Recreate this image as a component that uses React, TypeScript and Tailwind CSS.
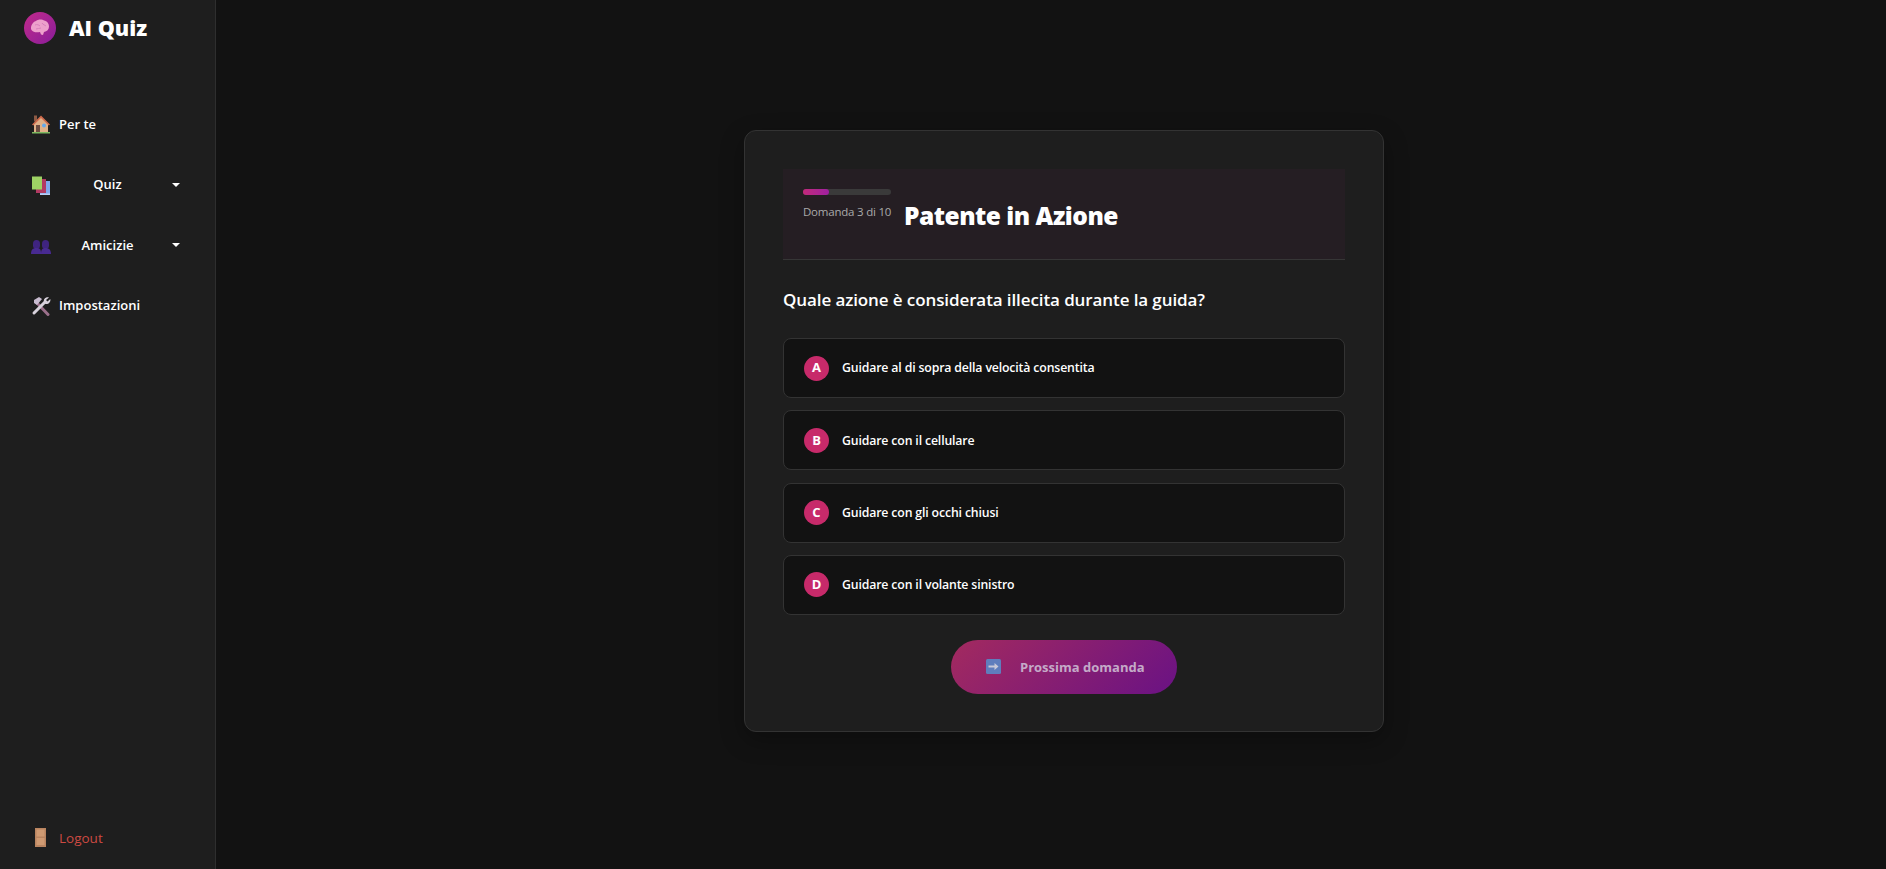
import React from "react";

const font = { fontFamily: '"Open Sans", "Noto Sans", sans-serif' };

function BrainIcon() {
  return (
    <svg viewBox="0 0 20 18" className="w-[20px] h-[18px]">
      <path d="M6 2c2-2 6-2 8-.5 3 .5 5 3 5 6 0 3-2 5-5 5.500l-1 3-2-.5-1-2.500c-3 .5-7 .5-8.500-2C0 8.500 2 3 6 2z" fill="#eda0cc" />
      <path d="M5 6c2-1 4 0 5 1M12 4c1 2 3 2 4 3M6 10c2 0 3-1 5-1" stroke="#d880bc" strokeWidth="1" fill="none" />
    </svg>
  );
}

function HouseIcon() {
  return (
    <svg viewBox="0 0 20 20" className="w-[20px] h-[20px]">
      <rect x="3" y="1.500" width="3" height="6" fill="#8d5a44" />
      <path d="M3 10 10 3l7 7v8H3z" fill="#e0b088" />
      <path d="M1 10.500 10 1.500l9 9-1.200 1L10 4 2.200 11.500z" fill="#cf6a4c" />
      <rect x="5" y="11" width="4" height="7" fill="#6d4c41" />
      <circle cx="13" cy="11.500" r="2" fill="#64a8ea" />
      <rect x="1" y="18" width="18" height="1.500" fill="#7cb860" />
    </svg>
  );
}

function BooksIcon() {
  return (
    <svg viewBox="0 0 20 20" className="w-[20px] h-[20px] mt-[2px]">
      <rect x="9" y="5" width="10" height="14" fill="#7fa8ec" />
      <rect x="9" y="17.500" width="10" height="1.500" fill="#b8cdf5" />
      <rect x="5" y="3" width="10" height="14" fill="#b23a62" />
      <rect x="1" y="0.500" width="10" height="13" fill="#9ed264" />
    </svg>
  );
}

function PeopleIcon() {
  return (
    <svg viewBox="0 0 20 14" className="w-[20px] h-[14px] mt-[4px]">
      <rect x="2" y="0" width="7" height="9" rx="3.500" fill="#3f2480" />
      <rect x="11" y="0" width="7" height="9" rx="3.500" fill="#3f2480" />
      <path d="M0 14c0-4 1.500-6 5.500-6S10 10 10 14z" fill="#482a92" />
      <path d="M10 14c0-4 1-6 4.500-6S20 10 20 14z" fill="#482a92" />
    </svg>
  );
}

function ToolsIcon() {
  return (
    <svg viewBox="0 0 20 20" className="w-[20px] h-[20px]">
      <path d="M6 7 17 18.500" stroke="#9a6f8a" strokeWidth="3" strokeLinecap="round" />
      <path d="M3 4l5-3 3 2-5 6-3-2z" fill="#c9bcd0" />
      <path d="M3 17 14 6" stroke="#d8d2dc" strokeWidth="3" strokeLinecap="round" />
      <path d="M13 6c-1-3 2-5.500 5-4.500l-3 2.500 1.500 1.500 2.800-2.500c.7 3-1.800 5.500-4.800 5z" fill="#d8d2dc" />
    </svg>
  );
}

function DoorIcon() {
  return (
    <svg viewBox="0 0 11 19" className="w-[11px] h-[19px]">
      <rect width="11" height="19" fill="#b98460" />
      <rect x="1.500" y="1.500" width="8" height="7" fill="#cf9a72" />
      <rect x="1.500" y="10" width="8" height="7" fill="#cf9a72" />
    </svg>
  );
}

function ArrowIcon() {
  return (
    <svg viewBox="0 0 15 15" className="w-[15px] h-[15px]">
      <rect width="15" height="15" rx="1.500" fill="#5f7dbd" />
      <path d="M2.500 6.500h6V4l4 3.500-4 3.500V8.500h-6z" fill="#c8c8d8" />
    </svg>
  );
}

const answers = [
  { letter: "A", text: "Guidare al di sopra della velocità consentita" },
  { letter: "B", text: "Guidare con il cellulare" },
  { letter: "C", text: "Guidare con gli occhi chiusi" },
  { letter: "D", text: "Guidare con il volante sinistro" },
];

function Sidebar() {
  return (
    <aside className="flex flex-col w-[216px] h-screen shrink-0 bg-[#1e1e1e] border-r border-[#2e2e2e]">
      <div className="flex items-center gap-[13px] pl-[24px] pt-[12px]">
        <div className="flex items-center justify-center w-[32px] h-[32px] rounded-full bg-gradient-to-br from-[#c2288a] to-[#8a1a9a]">
          <BrainIcon />
        </div>
        <span className="text-[21.500px] leading-[30px] font-extrabold text-white">AI Quiz</span>
      </div>
      <nav className="flex flex-col mt-[50px] pl-[31px] pr-[35px] text-[13px] font-semibold text-white">
        <div className="flex items-center gap-[8px] h-[60px]">
          <HouseIcon />
          <span className="pt-[1px]">Per te</span>
        </div>
        <div className="flex items-center h-[61px]">
          <BooksIcon />
          <span className="flex-1 text-center pl-[9px] pr-[17px] pt-[1px]">Quiz</span>
          <span className="w-0 h-0 border-x-[4px] border-x-transparent border-t-[4px] border-t-white" />
        </div>
        <div className="flex items-center h-[60px]">
          <PeopleIcon />
          <span className="flex-1 text-center pl-[9px] pr-[17px] pt-[1px]">Amicizie</span>
          <span className="w-0 h-0 border-x-[4px] border-x-transparent border-t-[4px] border-t-white" />
        </div>
        <div className="flex items-center gap-[8px] h-[61px]">
          <ToolsIcon />
          <span className="pt-[1px]">Impostazioni</span>
        </div>
      </nav>
      <div className="flex items-center gap-[13px] mt-auto mb-[21px] pl-[35px] text-[13.500px] font-medium text-[#cc4a42]">
        <DoorIcon />
        <span>Logout</span>
      </div>
    </aside>
  );
}

export default function App() {
  return (
    <div className="flex h-screen overflow-hidden bg-[#121212]" style={font}>
      <Sidebar />
      <main className="flex flex-1 items-center justify-center pl-[26px] pb-[7px]">
        <div className="w-[640px] h-[602px] px-[38px] pt-[38px] bg-[#1e1e1e] border border-[#333333] rounded-[12px] shadow-[0_8px_24px_rgba(0,0,0,0.3)]">
          <div className="flex h-[91px] px-[20px] pt-[20px] gap-[13px] bg-[#251e23] border-b border-[#363636]">
            <div className="w-[88px] shrink-0">
              <div className="w-full h-[6px] rounded-full bg-[#3a3a3a]">
                <div className="w-[26px] h-full rounded-full bg-gradient-to-r from-[#c2287a] to-[#a01ea0]" />
              </div>
              <p className="mt-[9px] text-[11.500px] leading-[16px] tracking-[-0.22px] text-[#aaaaaa] whitespace-nowrap">Domanda 3 di 10</p>
            </div>
            <h1 className="mt-[10px] text-[24.500px] leading-[34px] tracking-[-0.5px] font-extrabold text-white whitespace-nowrap">Patente in Azione</h1>
          </div>
          <h2 className="mt-[27px] text-[17px] leading-[26px] tracking-[-0.1px] font-semibold text-white">Quale azione è considerata illecita durante la guida?</h2>
          <div className="flex flex-col gap-[12.330px] mt-[25px]">
            {answers.map((answer) => (
              <div key={answer.letter} className="flex items-center gap-[13px] h-[60px] px-[20px] bg-[#121212] border border-[#333333] rounded-[8px]">
                <span className="flex items-center justify-center w-[25px] h-[25px] rounded-full bg-[#c72a6a] text-[13px] font-bold text-white">{answer.letter}</span>
                <span className="pt-[1px] text-[12.300px] tracking-[-0.15px] font-semibold text-white">{answer.text}</span>
              </div>
            ))}
          </div>
          <div className="flex justify-center mt-[25px]">
            <button className="flex items-center gap-[19px] w-[226px] h-[54px] pl-[35px] rounded-full bg-[linear-gradient(135deg,#a32a5f,#6a1284)] text-[13px] font-bold text-[#c4aac8]">
              <ArrowIcon />
              <span className="pt-[1px]">Prossima domanda</span>
            </button>
          </div>
        </div>
      </main>
    </div>
  );
}
